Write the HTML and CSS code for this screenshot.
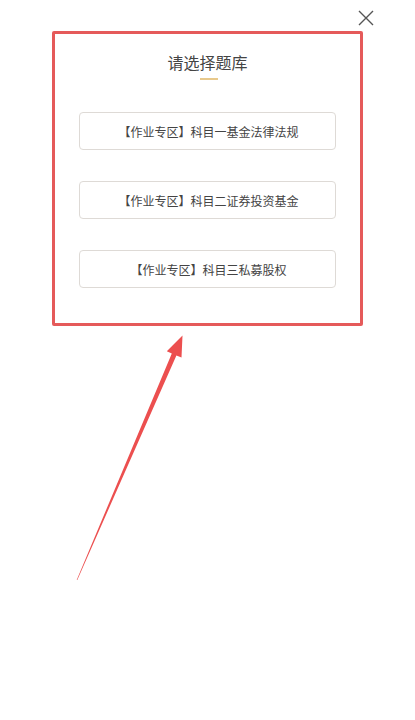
FILE: index.html
```html
<!DOCTYPE html>
<html lang="zh">
<head>
<meta charset="utf-8">
<link rel="stylesheet" href="styles.css">
</head>
<body>
<div class="page">
  <div class="dialog">
    <h1 class="title">请选择题库</h1>
    <div class="title-bar"></div>
    <div class="options">
      <div class="option">【作业专区】科目一基金法律法规</div>
      <div class="option">【作业专区】科目二证券投资基金</div>
      <div class="option">【作业专区】科目三私募股权</div>
    </div>
  </div>
  <svg class="close" width="16" height="16" viewBox="0 0 16 16">
    <path d="M1 1 L15 15 M15 1 L1 15" stroke="#555" stroke-width="1.4" fill="none"/>
  </svg>
  <svg class="arrow" width="415" height="720" viewBox="0 0 415 720">
    <polygon fill="#ec4f4f" points="182.5,335.5 166.8,351.2 171.8,353.4 76.7,580 77.3,580 176.4,355.4 181.5,357.6"/>
  </svg>
</div>
</body>
</html>
```
FILE: styles.css
```css
html, body {
  margin: 0;
  padding: 0;
  background: #ffffff;
}
body {
  font-family: "Noto Sans CJK SC", "Noto Sans", sans-serif;
  color: #444;
}
.page {
  position: relative;
  width: 415px;
  height: 720px;
  padding-top: 31px;
  box-sizing: border-box;
}
.dialog {
  margin-left: 52px;
  width: 311px;
  box-sizing: border-box;
  border: 3px solid #e55a5a;
  border-radius: 2px;
  background: #fff;
  padding: 17px 0 35px;
  display: flex;
  flex-direction: column;
  align-items: center;
}
.title {
  margin: 0;
  font-size: 16px;
  line-height: 22px;
  font-weight: normal;
  color: #444;
}
.title-bar {
  width: 18px;
  height: 2px;
  background: #e8c98c;
  margin-top: 5px;
  margin-left: 2px;
}
.options {
  margin-top: 32px;
  display: flex;
  flex-direction: column;
  gap: 31px;
}
.option {
  width: 257px;
  height: 38px;
  box-sizing: border-box;
  border: 1px solid #dedad6;
  border-radius: 4px;
  display: flex;
  align-items: center;
  justify-content: center;
  padding-left: 2px;
  font-size: 12px;
  color: #444;
}
.close {
  position: absolute;
  left: 358px;
  top: 10px;
}
.arrow {
  position: absolute;
  left: 0;
  top: 0;
  pointer-events: none;
}
```
